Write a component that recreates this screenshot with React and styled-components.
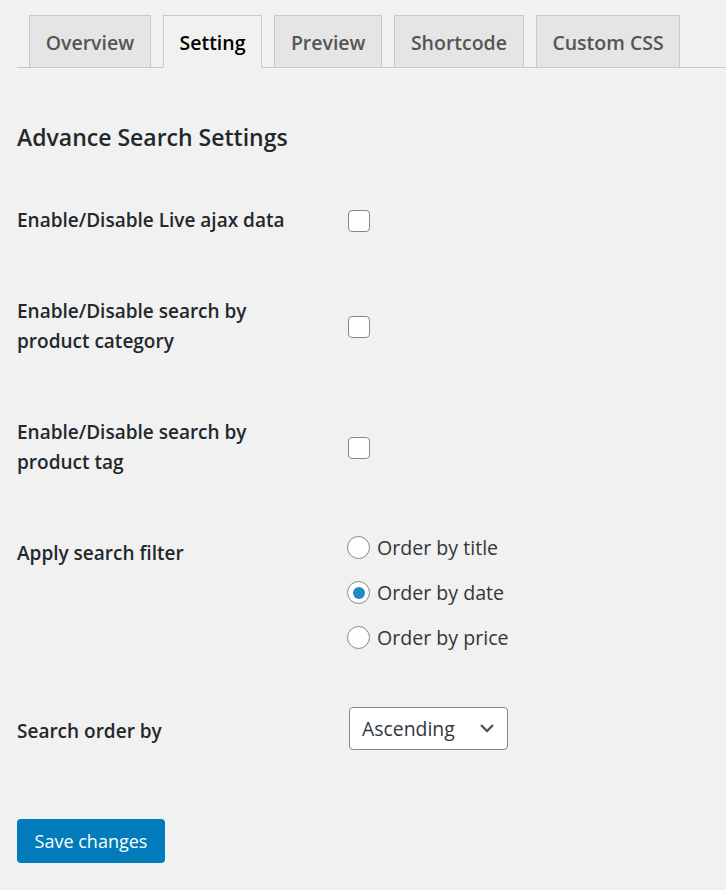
import React, {useState} from "react";
import styled, {createGlobalStyle} from "styled-components";

const GlobalStyle = createGlobalStyle`
  * { box-sizing: border-box; }
  body {
    margin: 0;
    background: #f1f1f1;
    font-family: "Open Sans", "Noto Sans", sans-serif;
    color: #23282d;
  }
`;

const Page = styled.div`
  padding: 15px 0 30px 17px;
`;

const TabBar = styled.nav`
  display: flex;
  gap: 12px;
  padding-left: 12px;
  border-bottom: 1px solid #c8c8c8;
`;

const Tab = styled.a`
  display: block;
  padding: 9px 15.7px 6px;
  line-height: 36px;
  font-size: 19.5px;
  font-weight: 600;
  color: ${(p) => (p.$active ? "#000" : "#555")};
  background: ${(p) => (p.$active ? "#f1f1f1" : "#e5e5e5")};
  border: 1px solid #c8c8c8;
  border-bottom: ${(p) => (p.$active ? "1px solid #f1f1f1" : "none")};
  margin-bottom: ${(p) => (p.$active ? "-1px" : "0")};
  cursor: pointer;
`;

const Heading = styled.h2`
  margin: 54px 0 23px;
  font-size: 23px;
  line-height: 30px;
  font-weight: 600;
  color: #23282d;
`;

const Row = styled.div`
  display: flex;
  align-items: center;
`;

const Label = styled.div`
  align-self: flex-start;
  width: 331px;
  padding: 30px 52px 31px 0;
  font-size: 19px;
  line-height: 30px;
  font-weight: 600;
  color: #23282d;
`;

const Field = styled.div`
  padding: ${(p) => p.$pad || "0"};
`;

const Checkbox = styled.span`
  display: block;
  width: 22px;
  height: 22px;
  background: #fff;
  border: 1.5px solid #7e8993;
  border-radius: 4px;
`;

const RadioItem = styled.label`
  display: flex;
  align-items: center;
  height: 45px;
  font-size: 19.6px;
  color: #32373c;
  cursor: pointer;
`;

const RadioCircle = styled.span`
  position: relative;
  width: 23px;
  height: 23px;
  margin: 0 7px 0 -1px;
  background: #fff;
  border: 1.5px solid #7e8993;
  border-radius: 50%;
  &::after {
    content: "";
    display: ${(p) => (p.$on ? "block" : "none")};
    position: absolute;
    left: 50%;
    top: 50%;
    width: 12px;
    height: 12px;
    transform: translate(-50%, -50%);
    border-radius: 50%;
    background: #1e8cbe;
  }
`;

const SelectBox = styled.div`
  display: flex;
  align-items: center;
  justify-content: space-between;
  width: 159px;
  height: 43px;
  margin-left: 1px;
  padding: 0 12px 0 12px;
  background: #fff;
  border: 1.5px solid #7e8993;
  border-radius: 4px;
  font-size: 19.4px;
  color: #32373c;
`;

const Button = styled.button`
  margin-top: 42px;
  width: 148px;
  height: 44px;
  background: #007cba;
  border: none;
  border-radius: 4px;
  color: #fff;
  font-family: inherit;
  font-size: 18px;
  cursor: pointer;
`;

const tabs = ["Overview", "Setting", "Preview", "Shortcode", "Custom CSS"];
const orders = ["Order by title", "Order by date", "Order by price"];

export default function App() {
  const [order, setOrder] = useState(1);

  return (
    <Page>
      <GlobalStyle />
      <TabBar>
        {tabs.map((t) => (
          <Tab key={t} $active={t === "Setting"}>
            {t}
          </Tab>
        ))}
      </TabBar>

      <Heading>Advance Search Settings</Heading>

      <Row>
        <Label>Enable/Disable Live ajax data</Label>
        <Field><Checkbox /></Field>
      </Row>
      <Row>
        <Label>Enable/Disable search by product category</Label>
        <Field><Checkbox /></Field>
      </Row>
      <Row>
        <Label>Enable/Disable search by product tag</Label>
        <Field><Checkbox /></Field>
      </Row>
      <Row>
        <Label>Apply search filter</Label>
        <Field $pad="17px 0 26px">
          {orders.map((o, i) => (
            <RadioItem key={o} onClick={() => setOrder(i)}>
              <RadioCircle $on={order === i} />
              {o}
            </RadioItem>
          ))}
        </Field>
      </Row>
      <Row>
        <Label>Search order by</Label>
        <Field $pad="0 0 7px">
          <SelectBox>
            Ascending
            <svg width="16" height="10" viewBox="0 0 16 10">
              <polyline points="2,2 8,8 14,2" fill="none" stroke="#50575e" strokeWidth="2.4" />
            </svg>
          </SelectBox>
        </Field>
      </Row>

      <Button>Save changes</Button>
    </Page>
  );
}
